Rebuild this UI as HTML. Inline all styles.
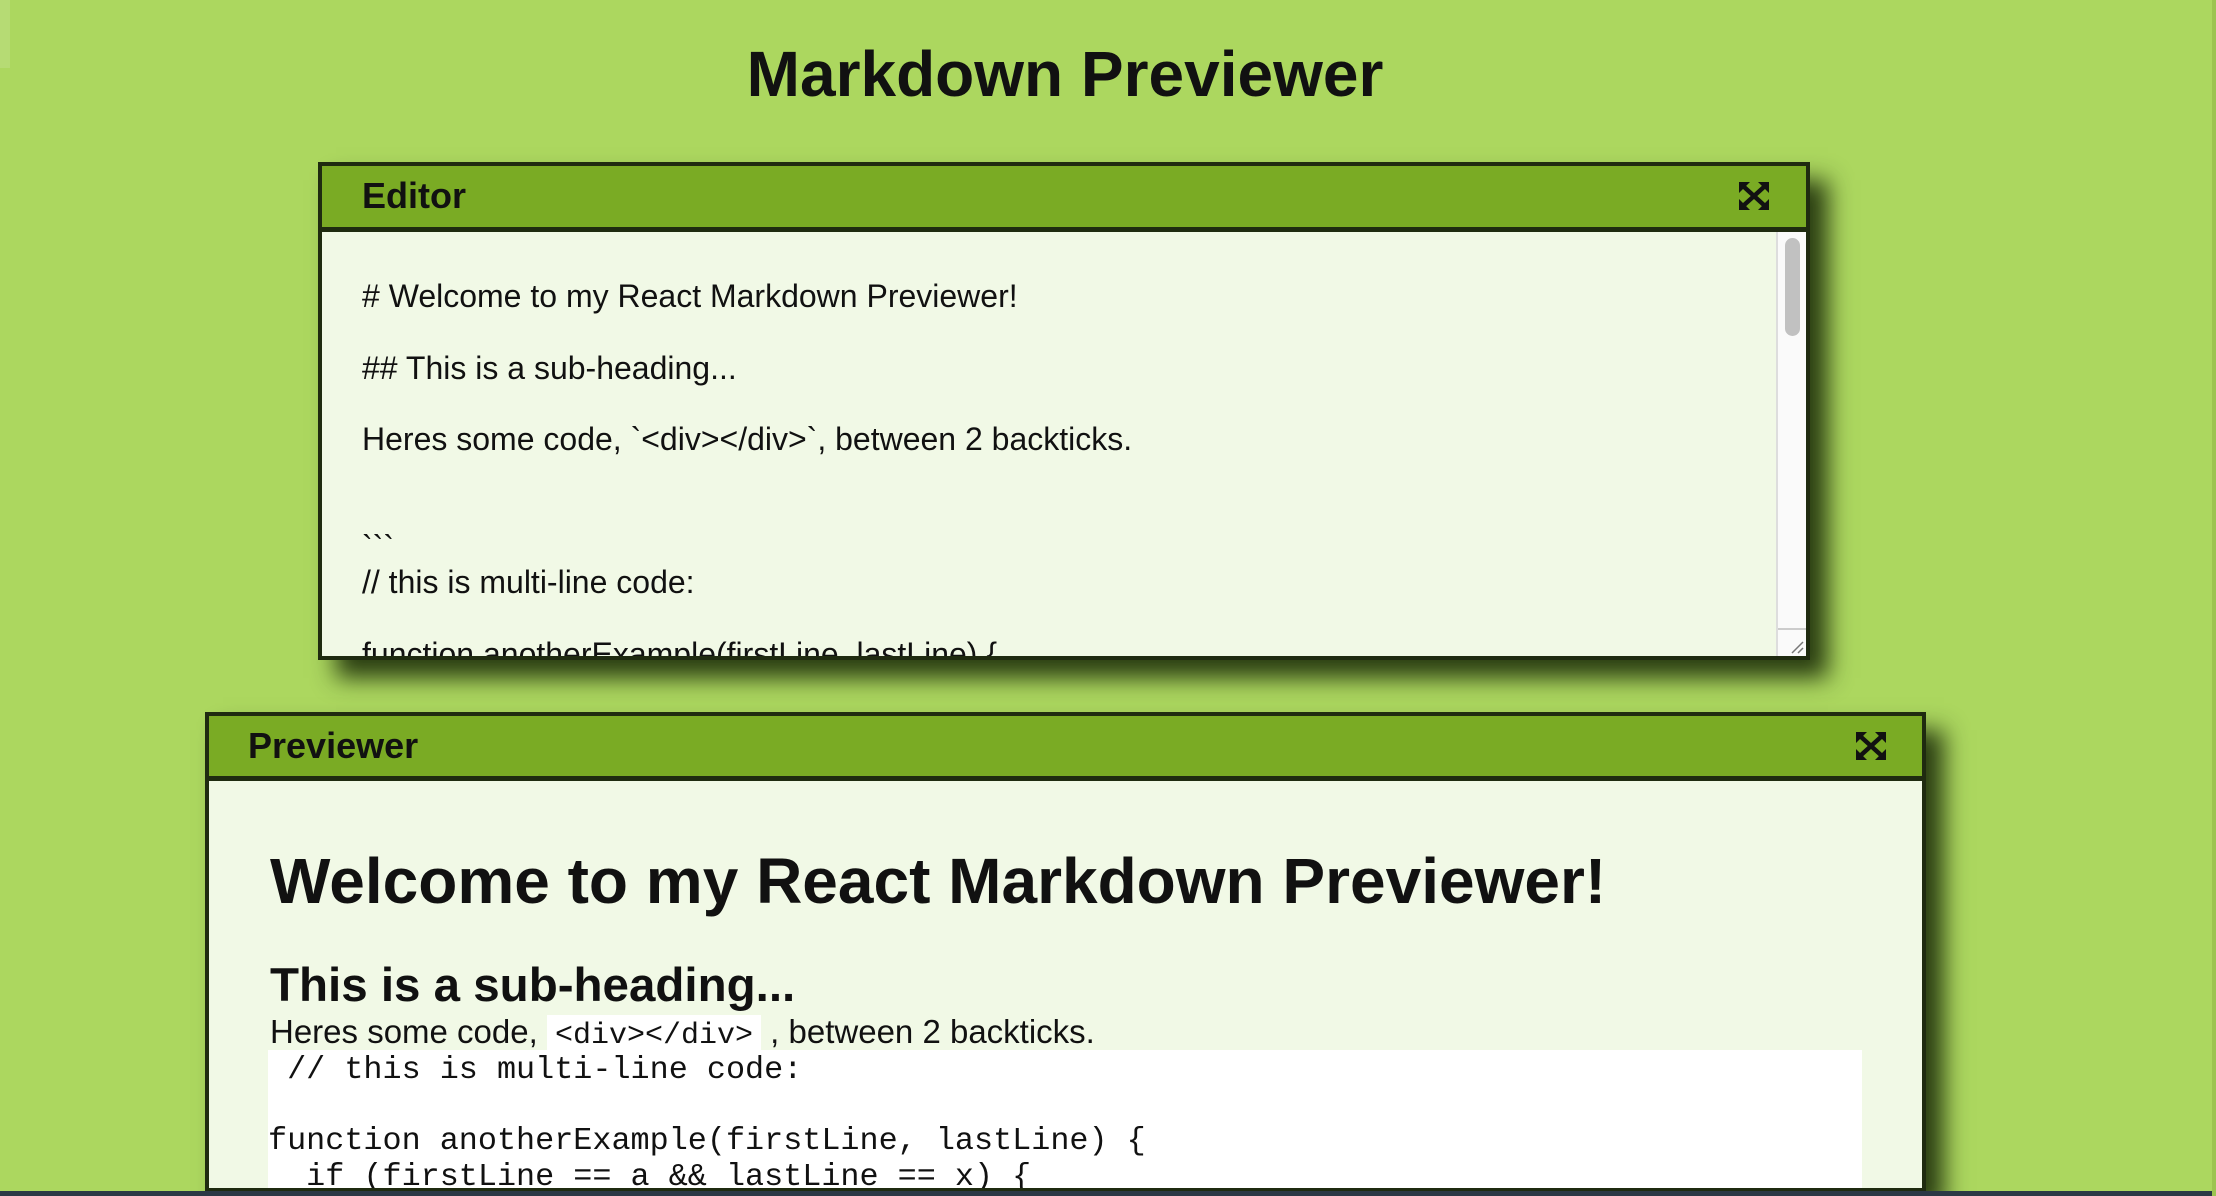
<!DOCTYPE html>
<html><head><meta charset="utf-8"><style>
html,body{margin:0;padding:0;width:2216px;height:1196px;overflow:hidden;}
body{background:#acd75f;position:relative;font-family:"Liberation Sans",Arial,sans-serif;color:#111;}
.abs{position:absolute;}
h1.title{position:absolute;left:0;width:2130px;top:36px;margin:0;text-align:center;font-size:64px;font-weight:bold;line-height:76px;color:#111;}
.win{position:absolute;border:4px solid #1f2b10;background:#f1f9e6;box-shadow:18px 18px 22px rgba(20,35,5,0.85);box-sizing:border-box;overflow:hidden;}
.hdr{position:absolute;left:0;right:0;top:0;height:61px;background:#7aab24;border-bottom:5px solid #1f2b10;}
.hdr span{position:absolute;top:8px;font-size:36px;font-weight:bold;line-height:44px;color:#111;}
.txt{position:absolute;left:40px;top:113px;font-size:32px;line-height:35.8px;white-space:pre;color:#111;}
.sb{position:absolute;top:66px;right:0;width:28px;bottom:0;background:#fafafa;border-left:2px solid #ddd;}
.thumb{position:absolute;left:7px;top:6px;width:15px;height:98px;border-radius:8px;background:#c1c1c1;}
pre{margin:0;}
</style></head><body>
<div class="abs" style="left:0;top:0;width:10px;height:68px;background:#b6db74"></div>
<h1 class="title">Markdown Previewer</h1>

<div class="win" style="left:318px;top:162px;width:1492px;height:498px;">
  <div class="hdr"><span style="left:40px">Editor</span>
    <svg class="abs" style="left:1417px;top:16px" width="30" height="28" viewBox="0 0 30 28"><g fill="#111"><path d="M0 0h11L0 11z"/><path d="M30 0H19L30 11z"/><path d="M0 28h11L0 17z"/><path d="M30 28H19L30 17z"/></g><g stroke="#111" stroke-width="4.5"><path d="M4 4L26 24M26 4L4 24"/></g></svg>
  </div>
  <div class="txt"># Welcome to my React Markdown Previewer!

## This is a sub-heading...

Heres some code, &#96;&lt;div&gt;&lt;/div&gt;&#96;, between 2 backticks.


&#96;&#96;&#96;
// this is multi-line code:

function anotherExample(firstLine, lastLine) {</div>
  <div class="sb"><div class="thumb"></div>
    <div class="abs" style="left:0;right:0;bottom:0;height:26px;border-top:2px solid #ccc;"></div>
    <svg class="abs" style="right:2px;bottom:2px" width="14" height="14"><path d="M2 13L13 2M8 13L13 8" stroke="#777" stroke-width="1.5"/></svg>
  </div>
</div>

<div class="win" style="left:205px;top:712px;width:1721px;height:480px;">
  <div class="hdr" style="height:60px"><span style="left:39px">Previewer</span>
    <svg class="abs" style="left:1647px;top:16px" width="30" height="28" viewBox="0 0 30 28"><g fill="#111"><path d="M0 0h11L0 11z"/><path d="M30 0H19L30 11z"/><path d="M0 28h11L0 17z"/><path d="M30 28H19L30 17z"/></g><g stroke="#111" stroke-width="4.5"><path d="M4 4L26 24M26 4L4 24"/></g></svg>
  </div>
  <div class="abs" style="left:61px;top:129px;font-size:64px;font-weight:bold;line-height:72px;white-space:nowrap;">Welcome to my React Markdown Previewer!</div>
  <div class="abs" style="left:61px;top:243px;font-size:47.5px;font-weight:bold;line-height:53px;white-space:nowrap;">This is a sub-heading...</div>
  <div class="abs" style="left:61px;top:298px;font-size:33px;line-height:36px;white-space:nowrap;">Heres some code, <span style="background:#fff;font-family:'Liberation Mono',monospace;font-size:30px;padding:4px 8px;">&lt;div&gt;&lt;/div&gt;</span> , between 2 backticks.</div>
  <pre class="abs" style="left:59px;top:334px;width:1594px;height:200px;background:#fff;font-family:'Liberation Mono',monospace;font-size:31.8px;line-height:35.5px;padding-top:3px;color:#111;"> // this is multi-line code:

function anotherExample(firstLine, lastLine) {
  if (firstLine == a &amp;&amp; lastLine == x) {</pre>
</div>

<div class="abs" style="left:0;top:1191px;width:2216px;height:5px;background:#2b3845"></div>
<div class="abs" style="left:2212px;top:0;width:4px;height:1196px;background:#9cc450"></div>
</body></html>
